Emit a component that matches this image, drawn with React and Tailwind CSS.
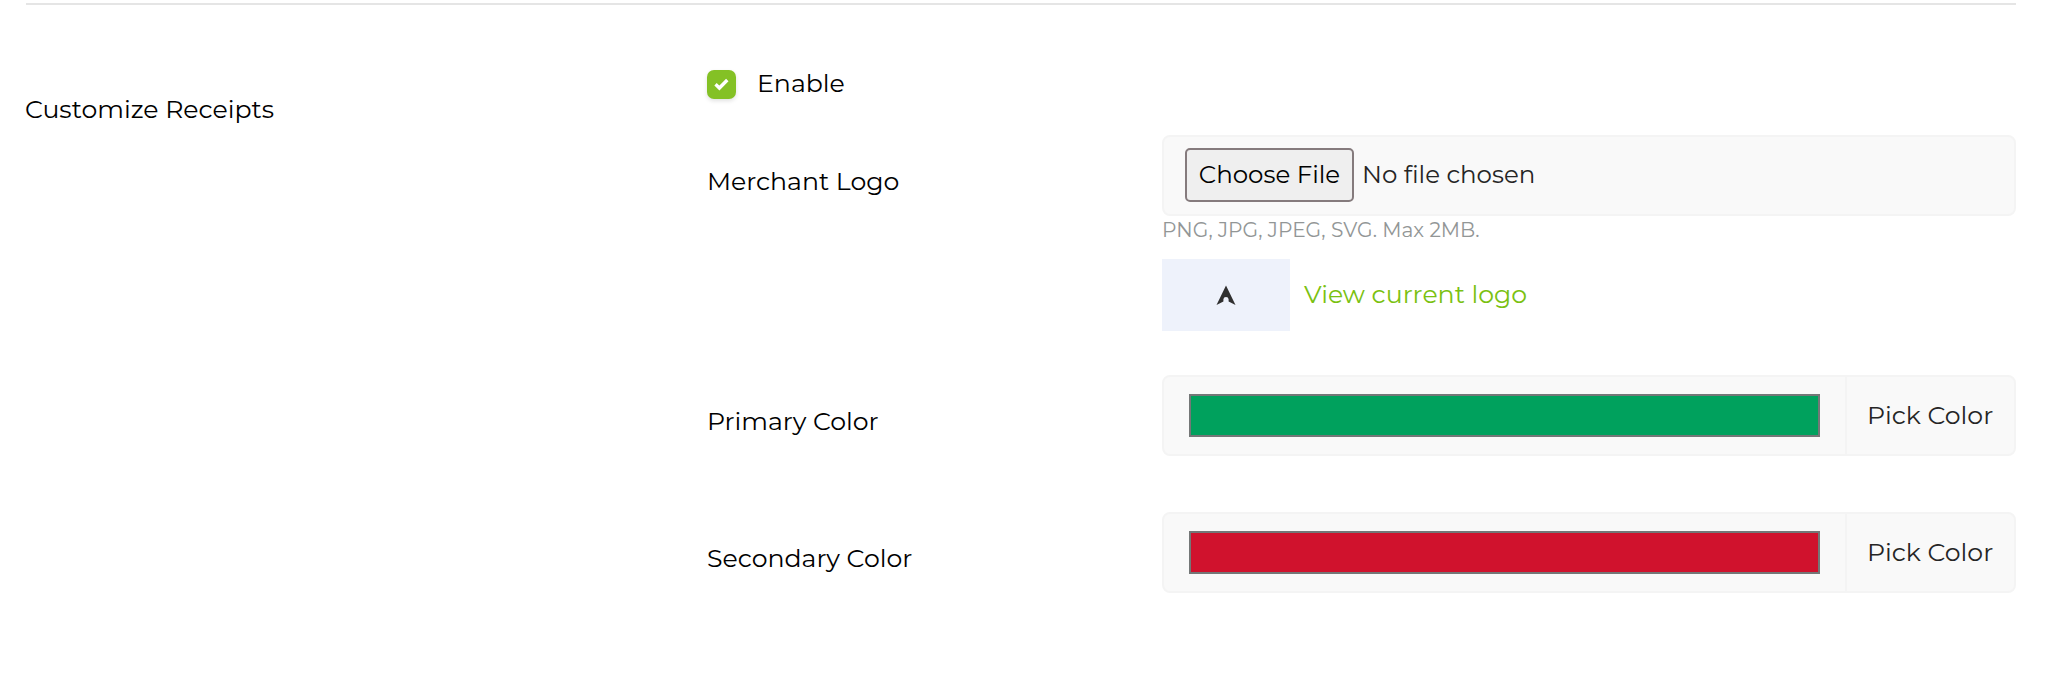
function ColorRow({ label, swatchClass }) {
  return (
    <div className="flex h-[81px]">
      <div className="w-[455px] shrink-0 pt-7">{label}</div>
      <div className="flex flex-1 rounded-lg border-2 border-[#f4f4f4] bg-[#f9f9f9]">
        <div className="flex flex-1 items-center border-r-2 border-[#f4f4f4] px-[25px]">
          <div className={swatchClass} />
        </div>
        <button className="flex w-[167px] shrink-0 items-center pb-0.5 pl-5 text-[#252525]">Pick Color</button>
      </div>
    </div>
  );
}

export default function App() {
  return (
    <div className="h-[695px] w-[2048px] overflow-hidden bg-white pt-[3px] pr-8 pl-[25px] font-['Montserrat','Inter',sans-serif] text-[25.2px] leading-9 whitespace-nowrap text-black">
      <div className="ml-px h-0.5 bg-[#e5e5e5]" />
      <div className="flex">
        <div className="w-[682px] shrink-0 pt-[86px]">Customize Receipts</div>

        <div className="flex flex-1 flex-col pt-[61px]">
          <label className="flex h-9 items-center gap-[21px]">
            <span className="flex size-[29px] items-center justify-center rounded-[7px] bg-[#84c125] shadow-[0_2px_4px_rgba(0,0,0,0.12)]">
              <svg className="h-[13px] w-[15px]" viewBox="0 0 15 13" fill="none" stroke="white" strokeWidth="3.4">
                <path d="M1.5 6.3 5.4 10 13.3 2" />
              </svg>
            </span>
            <span className="pb-0.5">Enable</span>
          </label>

          <div className="mt-[33px] flex">
            <div className="w-[455px] shrink-0 pt-7">Merchant Logo</div>
            <div className="flex-1">
              <div className="flex h-[81px] items-start rounded-lg border-2 border-[#f4f4f4] bg-[#f9f9f9] pt-[11px] pl-[21px] text-[24.5px]">
                <button className="flex h-[54px] w-[169px] items-center justify-center rounded-[5px] border-2 border-[#857b7d] bg-[#efefef] pb-0.5 text-black">
                  Choose File
                </button>
                <span className="pt-2 pl-2 text-[#252525]">No file chosen</span>
              </div>
              <div className="h-[43px] pt-px text-[20.15px] leading-[26px] text-[#929696]">
                PNG, JPG, JPEG, SVG. Max 2MB.
              </div>
              <div className="flex h-[72px] items-center gap-[14px]">
                <div className="flex h-[72px] w-32 items-center justify-center bg-[#eef2fb]">
                  <svg className="h-5 w-5" viewBox="0 0 20 20" fill="#303030">
                    <path d="M10 0.5 19.5 20 12.6 16.4V14.2Q12.4 12 10 12T7.4 14.2V16.4L0.5 20Z" />
                  </svg>
                </div>
                <a className="pb-0.5 text-[#7ac110]">View current logo</a>
              </div>
            </div>
          </div>

          <div className="mt-11 flex flex-col gap-14">
            <ColorRow
              label="Primary Color"
              swatchClass="h-[43px] w-full border-2 border-[#747777] bg-[#00a15d]"
            />
            <ColorRow
              label="Secondary Color"
              swatchClass="h-[43px] w-full border-2 border-[#747777] bg-[#d0122d]"
            />
          </div>
        </div>
      </div>
    </div>
  );
}
